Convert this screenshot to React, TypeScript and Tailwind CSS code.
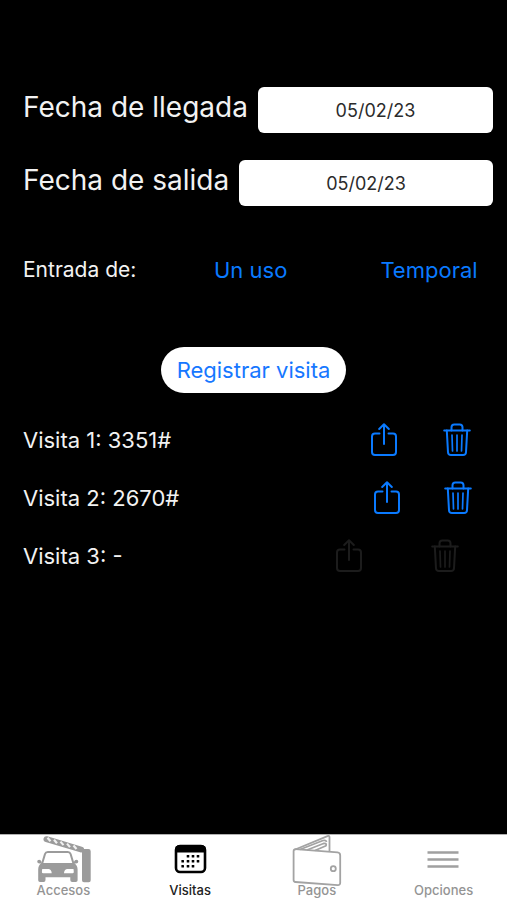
import { useState } from 'react';
import type { ReactNode } from 'react';

const visits = [
  { id: 1, code: '3351#', width: 'w-[73px]' },
  { id: 2, code: '2670#', width: 'w-[71px]' },
  { id: 3, code: '', width: 'w-[96px]' },
];

function ShareIcon() {
  return (
    <svg width="28" height="34" viewBox="0 0 28 34" fill="none" stroke="currentColor" strokeWidth="2" strokeLinecap="round" strokeLinejoin="round">
      <path d="M9.500 10.500H5a3 3 0 0 0-3 3V29a3 3 0 0 0 3 3h18a3 3 0 0 0 3-3V13.500a3 3 0 0 0-3-3h-4.500" />
      <path d="M14 21V1.500M9.200 6L14 1.300 18.800 6" />
    </svg>
  );
}

function TrashIcon() {
  return (
    <svg width="28" height="34" viewBox="0 0 28 34" fill="none" stroke="currentColor" strokeWidth="2" strokeLinecap="round" strokeLinejoin="round">
      <path d="M1.200 7.500h25.600" />
      <path d="M8.500 7.500V4.200a2.800 2.800 0 0 1 2.800-2.800h5.400a2.800 2.800 0 0 1 2.800 2.800v3.300" />
      <path d="M3.800 7.500L5 29.200A3 3 0 0 0 8 32h12a3 3 0 0 0 3-2.800L24.200 7.500" />
      <path strokeWidth="1.700" d="M9 12l.5 16M14 12v16M19 12l-.5 16" />
    </svg>
  );
}

function GateIcon() {
  return (
    <svg width="56" height="48" viewBox="0 0 56 48" className="overflow-visible">
      {/* barrier */}
      <path d="M11.500 4.200L46 14.500" stroke="#9b9b9b" strokeWidth="6" strokeLinecap="round" />
      <path d="M12.500 2.800l3 3.500M19 4.700l3 3.500M25.500 6.600l3 3.500M32 8.600l3 3.500M38.500 10.500l3 3.500" stroke="#f0f0f0" strokeWidth="2.200" />
      <path d="M47 15.500a1.500 1.500 0 0 1 1.500-1.500h5a2.200 2.200 0 0 1 2.200 2.200v29a2 2 0 0 1-2 2h-4.700a2 2 0 0 1-2-2z" fill="#9b9b9b" />
      {/* car */}
      <path d="M7 29l3-10q.7-2 2.800-2h20q2.100 0 2.800 2l3 10" fill="none" stroke="#9b9b9b" strokeWidth="2" />
      <path d="M2.200 26.600q0-1.800 2-1.800 1.600 0 2.200 1.700l.4 2H4.500q-2.300 0-2.300-1.900zM43.300 26.600q0-1.800-2-1.800-1.600 0-2.200 1.700l-.4 2H41q2.300 0 2.300-1.900z" fill="#9b9b9b" />
      <path d="M6.500 28h32.500q3.600 2 3.600 6.500v10.700q0 1.800-1.800 1.800h-3.600q-1.900 0-1.900-1.900v-2.900H10.500v2.900q0 1.900-1.900 1.900H5q-1.800 0-1.800-1.800V34.500q0-4.500 3.300-6.500z" fill="#9b9b9b" />
      <path d="M7.200 34h6.500q3 .7 3 4.300H8.200q-1.300 0-1.300-1.300zM38.500 34H32q-3 .7-3 4.300h8.500q1.300 0 1.300-1.300z" fill="#fff" />
    </svg>
  );
}

function CalendarIcon() {
  const dots = [
    [26, 21.300], [31, 21.300], [36, 21.300],
    [20.700, 26.300], [26, 26.300], [31, 26.300], [36, 26.300],
    [20.700, 31.300], [26, 31.300], [31, 31.300],
  ];
  return (
    <svg width="56" height="48" viewBox="0 0 56 48">
      <rect x="14" y="11" width="29" height="26" rx="4" fill="none" stroke="#000" strokeWidth="2.600" />
      <path d="M13 17.500V14.500a4.500 4.500 0 0 1 4.500-4.500h22a4.500 4.500 0 0 1 4.500 4.500v3z" fill="#000" />
      {dots.map(([x, y]) => (
        <rect key={`${x}-${y}`} x={x - 1.300} y={y - 1.300} width="2.600" height="2.600" rx="0.500" fill="#000" />
      ))}
    </svg>
  );
}

function WalletIcon() {
  return (
    <svg width="56" height="48" viewBox="1 0 56 48" className="overflow-visible" fill="none" stroke="#a3a3a3" strokeWidth="1.800" strokeLinejoin="round">
      <path d="M7.500 14.200l42 3.200a3 3 0 0 1 2.700 3V48a2.200 2.200 0 0 1-2.500 2.200L7.500 47a2 2 0 0 1-1.900-2V16a1.800 1.800 0 0 1 1.900-1.800z" />
      <path d="M6 15L39.500 1.200q2-.8 2 1.200v14" />
      <path d="M12 14.500L35 5.500q3-.8 3.500 1.500M19 15l16.500-6.500q3.500-.5 2.500 2.200L27 15.500" />
      <circle cx="45.300" cy="33.700" r="2.500" />
    </svg>
  );
}

function MenuIcon() {
  return (
    <svg width="56" height="48" viewBox="1 0 56 48" stroke="#a0a0a0" strokeWidth="2.400">
      <path d="M12.500 17.500h31M12.500 24.500h31M12.500 31.500h31" />
    </svg>
  );
}

function DateField({ id, label }: { id: string; label: string }) {
  const [value, setValue] = useState('05/02/23');
  return (
    <div className="flex items-start gap-[10px] pl-[9px]">
      <label htmlFor={id} className="text-[28px] leading-10 whitespace-nowrap">
        {label}
      </label>
      <input
        id={id}
        type="text"
        value={value}
        onChange={(e) => setValue(e.target.value)}
        className="h-[46px] min-w-0 flex-1 rounded-md bg-white text-center text-[18px] text-[#2b2b2b]"
      />
    </div>
  );
}

function Tab({ label, active, children }: { label: string; active?: boolean; children: ReactNode }) {
  return (
    <a
      href="#"
      aria-current={active ? 'page' : undefined}
      className={`flex flex-1 flex-col items-center text-[13px] leading-[14px] font-medium ${active ? 'text-[#222222]' : 'text-[#949494]'}`}
    >
      {children}
      <span>{label}</span>
    </a>
  );
}

export default function App() {
  return (
    <div className="flex min-h-screen flex-col bg-black font-['Inter',sans-serif] text-[#f2f2f2]">
      <main className="flex-1 px-[14px] pt-[87px]">
        <div className="flex flex-col gap-[27px]">
          <DateField id="llegada" label="Fecha de llegada" />
          <DateField id="salida" label="Fecha de salida" />
        </div>

        <div className="mt-[41px] flex h-[46px] items-center pl-[9px] text-[22px]">
          <span className="text-[21px]">Entrada de:</span>
          <button className="flex-1 text-[#0a7aff]">Un uso</button>
          <button className="w-32 text-[#0a7aff]">Temporal</button>
        </div>

        <div className="mt-[54px] flex justify-center">
          <button className="h-[46px] rounded-full bg-white px-4 text-[22px] text-[#1677ff]">
            Registrar visita
          </button>
        </div>

        <ul className="mt-[18px] pl-[9px]">
          {visits.map((visit) => (
            <li key={visit.id} className="flex h-[58px] items-center text-[22px]">
              <span className="flex-1">
                Visita {visit.id}: {visit.code || '-'}
              </span>
              <button
                aria-label={`Compartir visita ${visit.id}`}
                disabled={!visit.code}
                className={`flex justify-center text-[#0a7aff] disabled:text-[#1c1c1c] ${visit.width}`}
              >
                <ShareIcon />
              </button>
              <button
                aria-label={`Eliminar visita ${visit.id}`}
                disabled={!visit.code}
                className={`flex justify-center text-[#0a7aff] disabled:text-[#1c1c1c] ${visit.width}`}
              >
                <TrashIcon />
              </button>
            </li>
          ))}
        </ul>
      </main>

      <nav className="flex h-[66px] border-t border-[#b0b0b0] bg-white">
        <Tab label="Accesos">
          <GateIcon />
        </Tab>
        <Tab label="Visitas" active>
          <CalendarIcon />
        </Tab>
        <Tab label="Pagos">
          <WalletIcon />
        </Tab>
        <Tab label="Opciones">
          <MenuIcon />
        </Tab>
      </nav>
    </div>
  );
}
